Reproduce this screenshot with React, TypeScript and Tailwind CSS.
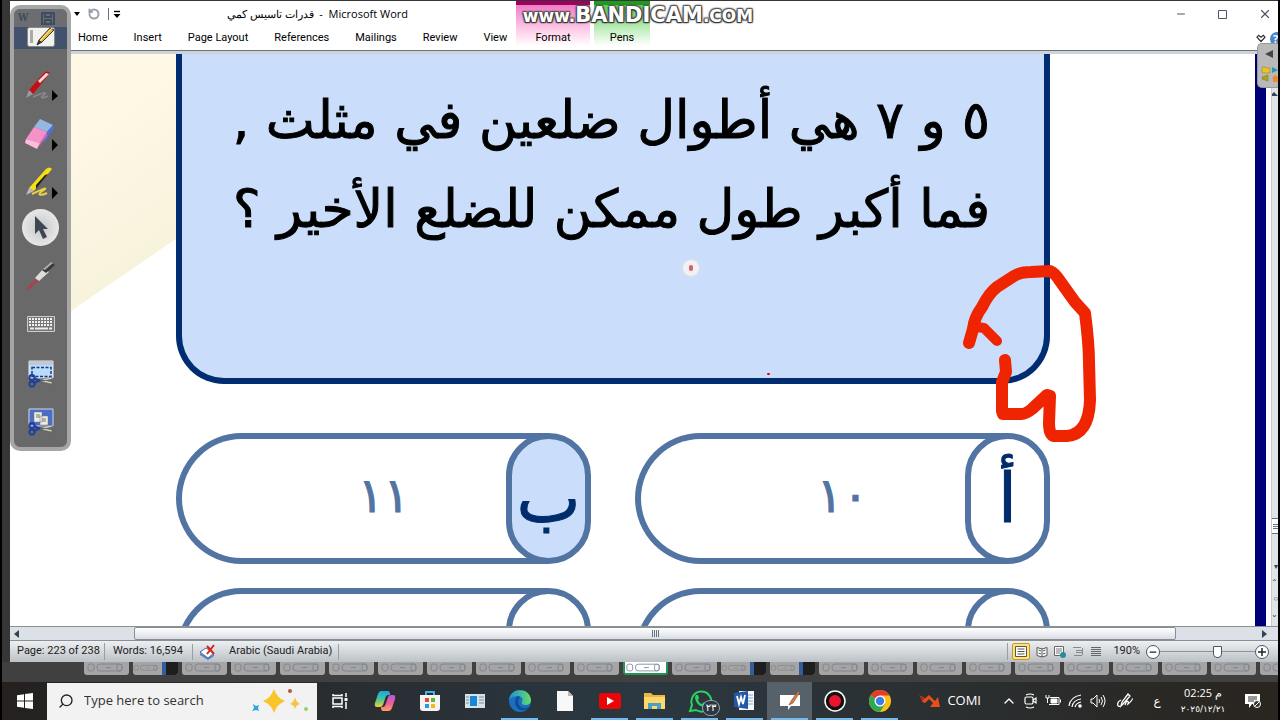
import React from 'react';
import clsx from 'clsx';
import { Minus, Square, X, ChevronUp, Search, RotateCcw } from 'lucide-react';

const tabs = ['Home', 'Insert', 'Page Layout', 'References', 'Mailings', 'Review', 'View'];

const options = [
    { letter: 'أ', answer: '١٠', selected: false },
    { letter: 'ب', answer: '١١', selected: true },
    { letter: 'ج', answer: '', selected: false },
    { letter: 'د', answer: '', selected: false },
];

const thumbs = Array.from({ length: 25 }, (_, i) => i);
const darkThumbs = [1, 13, 14];

function QuickAccess() {
    return (
        <div className="flex items-center gap-2 pl-16">
            <button aria-label="Undo options" className="h-0 w-0 border-x-[3px] border-t-4 border-x-transparent border-t-black" />
            <button aria-label="Repeat" className="text-gray-400">
                <RotateCcw className="h-3 w-3" strokeWidth={4} />
            </button>
            <div className="flex items-center gap-1">
                <div className="h-3 w-px bg-gray-500" />
                <button aria-label="Customize toolbar">
                    <svg width="8" height="9" viewBox="0 0 8 9">
                        <path d="M1 1.5h6" stroke="#000" strokeWidth="1.4" />
                        <path d="M.5 4h7L4 8z" />
                    </svg>
                </button>
            </div>
        </div>
    );
}

function Header() {
    return (
        <header className="relative flex h-[53px] shrink-0 border-b-[3px] border-[#d0d3d6] bg-white text-black">
            <div className="flex w-[506px] flex-col">
                <div className="flex h-[26px] items-center">
                    <QuickAccess />
                    <h1 dir="ltr" className="ml-auto mr-[108px] flex whitespace-pre text-[11px]">
                        <span dir="rtl">قدرات تاسيس كمي</span>
                        <span>{'  -  Microsoft Word'}</span>
                    </h1>
                </div>
                <nav className="flex h-[23px] items-center pl-[55px] font-['Roboto']">
                    {tabs.map(tab => (
                        <button key={tab} className="px-[13px] text-[11px] whitespace-nowrap">{tab}</button>
                    ))}
                </nav>
            </div>
            <button className="flex h-[45px] w-[74px] items-end justify-center border-t-4 border-[#a00060] bg-linear-to-b from-[#f07cc4] to-white font-['Roboto'] text-[11px]">Format</button>
            <button className="ml-1 flex h-[45px] w-14 items-end justify-center border-t-4 border-[#1f9a1f] bg-linear-to-b from-[#58d058] to-white font-['Roboto'] text-[11px]">Pens</button>
            <div className="ml-auto flex flex-col items-end">
                <div className="flex h-[26px] items-center gap-[30px] pr-[6px] text-gray-600">
                    <button aria-label="Minimize"><Minus className="h-3 w-3" strokeWidth={2} /></button>
                    <button aria-label="Maximize">
                        <svg width="11" height="11" viewBox="0 0 11 11" fill="none" stroke="currentColor"><path d="M1.500 1.500h8v8h-8z" /></svg>
                    </button>
                    <button aria-label="Close"><X className="h-[14px] w-[14px]" strokeWidth={2} /></button>
                </div>
                <div className="flex h-[23px] items-center gap-1">
                    <button aria-label="Minimize the ribbon">
                        <svg width="10" height="9" viewBox="0 0 10 9" fill="none" stroke="#333" strokeWidth="1.2">
                            <path d="M1 3.2 2.7 1.3 5 3.2 7.3 1.3 9 3.2 5 7.5z" />
                        </svg>
                    </button>
                    <button aria-label="Help" className="flex h-[14px] w-2 overflow-hidden rounded-l-full bg-[#4a86c8] pl-[3px] text-[11px] leading-[14px] font-bold text-white">?</button>
                </div>
            </div>
            <div className="absolute inset-x-0 bottom-0 h-px bg-gray-500" />
            <div className="absolute inset-x-0 top-[2px] flex items-baseline justify-center pr-3 font-['DejaVu_Sans'] text-[17px] leading-6 font-bold text-white [text-shadow:1px_1px_1px_#333,-1px_-1px_1px_#555,1px_-1px_1px_#555,-1px_1px_1px_#333,0_0_3px_#444]">
                <span>www.</span>
                <span className="text-[21px]">BANDICAM</span>
                <span>.COM</span>
            </div>
        </header>
    );
}

function Scissors() {
    return (
        <g>
            <path d="M10 20 25 17v2L12 22zM11 21l14 3v-2L12 19z" fill="#d6d8c8" stroke="#555" strokeWidth=".5" />
            <g fill="none" stroke="#1f3f9c" strokeWidth="2">
                <circle cx="5" cy="17.500" r="2.600" />
                <circle cx="5" cy="24" r="2.600" />
                <path d="m7 18 6 3M7 23l6-3" />
            </g>
        </g>
    );
}

function PenToolbar() {
    return (
        <aside className="absolute top-1 left-0 flex h-[446px] w-[61px] flex-col items-center overflow-hidden rounded-[10px] border-4 border-[#a6a6a6] bg-[#696969]">
            <div className="flex h-[18px] w-full items-center gap-3 bg-[#6b6d70] pl-1 text-[#3f4b5f]">
                <span className="font-serif text-[11px] font-bold">W</span>
                <svg width="14" height="13" viewBox="0 0 14 13" fill="none" stroke="currentColor" strokeWidth="2">
                    <path d="M1 1h12v11H1zM4 1v4h6V1M4 12V8h6v4" />
                </svg>
            </div>
            <button aria-label="Whiteboard" className="flex h-[22px] w-full shrink-0 justify-center bg-[#42526d]">
                <svg width="28" height="20" viewBox="0 0 28 20">
                    <rect x=".5" y=".5" width="27" height="19" rx="2" fill="#f1f1ee" stroke="#888" />
                    <path d="M3 3h3v13H3z" fill="#aaa" />
                    <path d="m10 18 2-5L23 1l4 2-12 12z" fill="#eab530" stroke="#333" />
                    <path d="m10 18 2-5 3 2z" fill="#333" />
                    <path d="m13 14 12-13" stroke="#fff2a5" />
                </svg>
            </button>
            <button aria-label="Pen" className="mt-5 h-8 w-9">
                <svg width="36" height="32" viewBox="0 0 36 32">
                    <path d="M10 28c8-4 16-6 11-2-5 3-2 4 4 1" fill="none" stroke="#888" strokeWidth="1.500" />
                    <path d="M6 21 21 4q3-3 6 0L10 25z" fill="#c90c13" />
                    <path d="m15 12 8-8 3 1-9 9z" fill="#ffd8d8" />
                    <path d="m6 21 4 4-7 4z" fill="#9a9a9a" />
                    <path d="m29 21 6 6-6 5z" />
                </svg>
            </button>
            <button aria-label="Eraser" className="mt-4 h-8 w-9">
                <svg width="36" height="34" viewBox="0 0 36 34">
                    <path d="M17 2 30 8 24 15 11 10z" fill="#94b8df" />
                    <path d="m30 8 1 3-10 15-1-4 4-7z" fill="#4e70dc" />
                    <path d="m11 10 13 5-7 11-14-4z" fill="#f791c9" />
                    <path d="m3 22 14 4-3 6L2 26z" fill="#ffbddd" />
                    <path d="m17 26 7-11v4L14 32z" fill="#da69ac" />
                    <path d="m29 22 6 6-6 6z" />
                </svg>
            </button>
            <button aria-label="Highlighter" className="mt-4 h-8 w-9">
                <svg width="36" height="34" viewBox="0 0 36 34">
                    <path d="M9 29c17-8 15-6 9-2-4 3 0 4 6 1" fill="none" stroke="#e8cf49" strokeWidth="2" />
                    <path d="M6 23 23 4q3-3 6 0L11 26z" fill="#f7df14" />
                    <path d="m13 20 9-10 3-1-12 15z" fill="#222" />
                    <path d="m6 23 5 3-8 4z" fill="#bbb" />
                    <path d="m29 22 6 6-6 6z" />
                </svg>
            </button>
            <button aria-label="Pointer" className="mt-3 flex h-[37px] w-[37px] shrink-0 items-center justify-center rounded-full bg-radial from-[#c6c6c6] to-[#f6f6f6]">
                <svg width="18" height="26" viewBox="0 0 18 26">
                    <path d="M3 1v18l4-4 4 9 4-2-4-8h5z" fill="#3f4653" />
                </svg>
            </button>
            <button aria-label="Laser pointer" className="mt-[14px] h-8 w-8">
                <svg width="32" height="32" viewBox="0 0 32 32">
                    <path d="m3 29 12-12" stroke="#c53343" strokeWidth="2" />
                    <path d="m10 18 9-10 5 4-10 9z" fill="#ddd" />
                    <path d="m17 10 9-8 4 3-9 8z" fill="#373a38" />
                    <path d="m18 9 8-7 2 1-8 7z" fill="#aaa" />
                </svg>
            </button>
            <button aria-label="Keyboard" className="mt-6">
                <svg width="28" height="16" viewBox="0 0 28 16">
                    <path d="M.5.5h27v15H.5z" fill="#777" stroke="#ccc" />
                    <path d="M2 3h24M2 6h24M2 9h24" stroke="#f2f2f2" strokeWidth="2" strokeDasharray="2 1" />
                    <path d="M3 12.500h22" stroke="#eee" strokeWidth="2" strokeDasharray="4 1 13 1" />
                </svg>
            </button>
            <button aria-label="Capture window" className="mt-7">
                <svg width="28" height="28" viewBox="0 0 28 28">
                    <path d="M2 1h24v17H2z" fill="#b8ddfa" stroke="#e7e9ee" />
                    <path d="M2 1h24v4H2z" fill="#c4c8d2" />
                    <path d="M5 7.500h19v9H5z" fill="none" stroke="#173b8c" strokeWidth="1.500" strokeDasharray="3 1.500" />
                    <Scissors />
                </svg>
            </button>
            <button aria-label="Capture page" className="mt-5">
                <svg width="28" height="28" viewBox="0 0 28 28">
                    <path d="M2 1h24v17H2z" fill="#4a6dc5" stroke="#d3daf0" />
                    <path d="M7 4h8v10H7zM13 8h8v9h-8z" fill="#eeeee4" stroke="#777" strokeWidth=".5" />
                    <path d="M9 7h4M9 9h4M15 11h4M15 13h4" stroke="#777" />
                    <Scissors />
                </svg>
            </button>
        </aside>
    );
}

function Ink() {
    return (
        <svg className="pointer-events-none absolute top-[206px] left-[945px]" width="150" height="190" viewBox="955 260 150 190" fill="none" stroke="#ef2400" strokeWidth="12" strokeLinecap="round" strokeLinejoin="round">
            <path d="M969 343 973 329Q974 318 982 307 989 293 997 287L1014 276Q1020 272 1031 272L1050 271Q1055 273 1060 281L1075 302 1085 313Q1089 344 1089 362L1090 400Q1089 434 1067 436L1054 436Q1049 435 1049 423L1050 396 1047 395 1032 409Q1026 414 1021 414L1003 414 1002 411 1002 382 1006 372 1005 360" />
            <path d="M977 327 984 328 990 334 997 341" strokeWidth="10" />
        </svg>
    );
}

function Document() {
    return (
        <div className="flex min-h-0 flex-1">
            <main dir="rtl" lang="ar" className="relative flex-1 overflow-hidden bg-white pr-[205px] pl-[166px] font-['DejaVu_Sans',sans-serif]">
                <svg className="absolute top-0 left-0" width="170" height="300" viewBox="0 0 170 300">
                    <defs>
                        <linearGradient id="sand" x1="0" y1="0" x2=".4" y2="1">
                            <stop offset=".4" stopColor="#fef8e4" />
                            <stop offset="1" stopColor="#f5f1da" />
                        </linearGradient>
                    </defs>
                    <path d="M0 0H170V182L0 299z" fill="url(#sand)" />
                </svg>
                <section className="relative h-[330px] rounded-b-[48px] border-[6px] border-t-0 border-[#002c72] bg-[#cadefb] px-[54px] pt-[22px] text-[52px] leading-[89px] whitespace-nowrap text-black [-webkit-text-stroke:1px_black]">
                    <p>٥ و ٧ هي أطوال ضلعين في مثلث ,</p>
                    <p>فما أكبر طول ممكن للضلع الأخير ؟</p>
                </section>
                <div className="mt-[49px] grid grid-cols-2 gap-x-11 gap-y-6">
                    {options.map(option => (
                        <button key={option.letter} dir="ltr" className="flex h-[131px]">
                            <span className="-mr-[43px] flex h-full flex-1 items-center justify-center rounded-l-full border-[6px] border-r-0 border-[#5274a2] pb-2 pl-9 text-[48px] text-[#5274a2] [-webkit-text-stroke:1px_#5274a2]">
                                {option.answer}
                            </span>
                            <span className={clsx(
                                'relative flex h-full w-[85px] items-center justify-center rounded-full border-[6px] border-[#5274a2] text-[68px] leading-none text-[#002c6c] [-webkit-text-stroke:1px_#002c6c]',
                                option.selected ? 'bg-[#cadefb]' : 'bg-white'
                            )}>
                                {option.answer && option.letter}
                            </span>
                        </button>
                    ))}
                </div>
                <Ink />
                {/* laser pointer */}
                <div className="absolute top-[204px] left-[671px] flex h-5 w-5 items-center justify-center rounded-full border-2 border-[#d3dfee] bg-[#f0f0f5]">
                    <div className="h-[6px] w-1 rounded-full bg-[#d4616b]" />
                </div>
                <div className="absolute top-[319px] left-[757px] h-[2px] w-[3px] rounded-full bg-red-600" />
            </main>
            <div className="w-[11px] bg-[#000078]" />
            <div className="w-[5px] bg-white" />
            <div className="flex w-[7px] flex-col items-end justify-between overflow-hidden border-l border-[#c3c9ce] bg-[#dfe4e8] pt-[38px]">
                <button aria-label="Scroll up" className="h-0 w-0 border-x-4 border-b-4 border-x-transparent border-b-gray-700" />
                <div className="mt-auto flex h-4 w-[7px] flex-col justify-center gap-px border border-r-0 border-gray-500 bg-white pl-px">
                    <div className="h-px bg-gray-500" />
                    <div className="h-px bg-gray-500" />
                    <div className="h-px bg-gray-500" />
                </div>
                <div className="flex h-[92px] flex-col items-end justify-end gap-2 pb-2 text-[8px] leading-2 text-gray-700">
                    <span>▾</span>
                    <span>⌃</span>
                    <span>○</span>
                    <span>⌄</span>
                </div>
            </div>
        </div>
    );
}

function HorizontalScroll() {
    return (
        <div className="flex h-[15px] shrink-0 items-center border-y border-[#8b9095] bg-[#dce1e7] pr-[11px] pl-1">
            <button aria-label="Scroll left" className="h-0 w-0 border-y-4 border-r-[5px] border-y-transparent border-r-gray-700" />
            <div className="ml-[115px] flex h-[13px] flex-1 items-center justify-center gap-px rounded-xs border border-[#888e94] bg-linear-to-b from-white to-[#d9dee4]">
                <div className="h-[7px] w-px bg-gray-500" />
                <div className="h-[7px] w-px bg-gray-500" />
                <div className="h-[7px] w-px bg-gray-500" />
                <div className="h-[7px] w-px bg-gray-500" />
            </div>
            <button aria-label="Scroll right" className="ml-[86px] h-0 w-0 border-y-4 border-l-[5px] border-y-transparent border-l-gray-700" />
        </div>
    );
}

function StatusBar() {
    return (
        <footer className="flex h-[21px] shrink-0 items-center bg-linear-to-b from-[#edf0f2] to-[#bcc1c6] font-['Roboto'] text-[11px] whitespace-nowrap text-[#222]">
            <span className="w-[94px] pl-[7px]">Page: 223 of 238</span>
            <span className="w-[88px] border-l border-[#9a9fa4] pl-2">Words: 16,594</span>
            <span className="flex h-4 w-[147px] items-center gap-[14px] border-x border-[#9a9fa4] pl-[6px]">
                <svg width="16" height="16" viewBox="0 0 16 16" className="shrink-0">
                    <path d="M1 8 7 4l8 5-6 5z" fill="#fff" stroke="#4468a4" />
                    <path d="m1 9 8 5 6-4v2l-6 4-8-5z" fill="#4f7fc4" />
                    <path d="m8 2 7 8M15 1 8 10" stroke="#d3241d" strokeWidth="2" />
                </svg>
                Arabic (Saudi Arabia)
            </span>
            <div className="ml-auto flex items-center gap-[6px] border-l border-[#9a9fa4] pr-[9px] pl-1">
                <button aria-label="Print layout" className="flex h-[17px] w-[18px] items-center justify-center rounded-xs border border-[#c49a27] bg-[#ffe27c]">
                    <svg width="12" height="11" viewBox="0 0 12 11">
                        <path d="M.5.5h11v10H.5z" fill="#fff" stroke="#555" />
                        <path d="M2.500 3h7M2.500 5.500h7M2.500 8h7" stroke="#555" />
                    </svg>
                </button>
                <button aria-label="Full screen reading">
                    <svg width="12" height="12" viewBox="0 0 12 12" fill="#fff" stroke="#555">
                        <path d="M1 1.500 6 3l5-1.500v8L6 11 1 9.500zM6 3v8M2.500 4 5 5M2.500 7 5 8M7 5l2.500-1M7 8l2.500-1" />
                    </svg>
                </button>
                <button aria-label="Web layout">
                    <svg width="12" height="12" viewBox="0 0 12 12">
                        <path d="M.5.500h9v9h-9z" fill="#fff" stroke="#666" />
                        <path d="M2 3h6M2 5h6M2 7h4" stroke="#777" />
                        <circle cx="9" cy="9" r="3" fill="#2b8a9a" />
                    </svg>
                </button>
                <button aria-label="Outline">
                    <svg width="12" height="11" viewBox="0 0 12 11" stroke="#888">
                        <path d="M1 1.500h8M4 4.500h6M4 6.500h6M2 9.500h8M10.500 2v7" />
                    </svg>
                </button>
                <button aria-label="Draft">
                    <svg width="12" height="11" viewBox="0 0 12 11" stroke="#666">
                        <path d="M1 1.500h10M1 3.500h10M1 5.500h10M1 7.500h10M1 9.500h10" />
                    </svg>
                </button>
                <button className="ml-1 w-7 text-right">190%</button>
                <div className="flex items-center">
                    <button aria-label="Zoom out" className="flex h-[14px] w-[14px] items-center justify-center rounded-full border border-gray-600 bg-white"><Minus className="h-[10px] w-[10px]" strokeWidth={3} /></button>
                    <input
                        type="range"
                        aria-label="Zoom"
                        min={10}
                        max={500}
                        defaultValue={310}
                        className="h-[13px] w-[95px] appearance-none bg-[linear-gradient(#8d9297,#8d9297)] bg-[length:100%_1px] bg-center bg-no-repeat [&::-webkit-slider-thumb]:h-[12px] [&::-webkit-slider-thumb]:w-[9px] [&::-webkit-slider-thumb]:appearance-none [&::-webkit-slider-thumb]:rounded-b-[4px] [&::-webkit-slider-thumb]:border [&::-webkit-slider-thumb]:border-gray-600 [&::-webkit-slider-thumb]:bg-white"
                    />
                    <button aria-label="Zoom in" className="flex h-[14px] w-[14px] items-center justify-center rounded-full border border-gray-600 bg-white text-sm leading-none">
                        <svg width="8" height="8" viewBox="0 0 8 8" stroke="#222" strokeWidth="1.500"><path d="M4 0v8M0 4h8" /></svg>
                    </button>
                </div>
            </div>
        </footer>
    );
}

function Thumbnails() {
    return (
        <div className="flex h-5 shrink-0 gap-1 overflow-hidden bg-[#404040] pl-[82px]">
            {thumbs.map(i => (
                <div key={i} className={clsx(
                    'flex h-[13px] w-[45px] shrink-0 justify-end overflow-hidden rounded-b-[3px]',
                    i === 11 ? 'border-2 border-t-0 border-[#219653] bg-white' : 'bg-[#a5a5a5]'
                )}>
                    <svg width="43" height="13" viewBox="0 0 43 13" fill="none" stroke={i === 11 ? '#8a93a5' : '#808691'}>
                        <rect x="2" y="2" width="6" height="7" rx="2" />
                        <rect x="11" y="2" width="25" height="7" rx="3" />
                        <rect x="31" y="2" width="5" height="7" rx="2" />
                        <path d="M20 5.500h5" />
                    </svg>
                    {darkThumbs.includes(i) && <div className="w-4 shrink-0 border-l-4 border-[#315f9d] bg-[#1e1e1e]" />}
                </div>
            ))}
        </div>
    );
}

function AppButton({ label, active, running, children }: { label: string; active?: boolean; running?: boolean; children: React.ReactNode }) {
    return (
        <button aria-label={label} className={clsx('relative flex h-full w-[45px] items-center justify-center', active && 'bg-[#56616a]')}>
            {children}
            {running && <span className="absolute inset-x-1 bottom-0 h-[2px] bg-[#76b9ed]" />}
        </button>
    );
}

function Taskbar() {
    return (
        <div className="flex h-[38px] shrink-0 items-center bg-linear-to-r from-[#24211f] via-[#2b3841] via-50% to-[#29251f] text-white">
            <button aria-label="Start" className="flex h-full w-[45px] items-center justify-center">
                <svg width="16" height="16" viewBox="0 0 16 16" fill="#fff">
                    <path d="M0 2.200 7 1.200V7.500H0zM8 1 16 0V7.500H8zM0 8.500H7V14.800L0 13.800zM8 8.500H16V16L8 15z" />
                </svg>
            </button>
            <label className="flex h-[37px] w-[270px] items-center bg-[#f2f2f2] pl-[11px] text-[#222]">
                <Search className="h-4 w-4 shrink-0 -scale-x-100" strokeWidth={2} />
                <input type="text" aria-label="Search" placeholder="Type here to search" className="ml-[10px] min-w-0 flex-1 text-[13px] outline-none placeholder:text-[#333]" />
                <svg width="58" height="30" viewBox="0 0 58 30" className="mr-2">
                    <path d="M23 3q3 9 11 12-8 3-11 12-3-9-11-12 8-3 11-12" fill="#f9c52b" />
                    <path d="M44 11q1 5 5 7-4 1-5 5-1-4-5-5 4-2 5-7" fill="#f4c54a" />
                    <path d="m2 18 3 2 3-1-1 3 1 3-3-1-4 1 2-3z" fill="#2aa8da" />
                    <circle cx="39" cy="5" r="2" fill="#b8592d" />
                    <circle cx="55" cy="23" r="2" fill="#92d46b" />
                </svg>
            </label>
            <div className="flex h-full">
                <AppButton label="Task view">
                    <svg width="16" height="16" viewBox="0 0 16 16" fill="none" stroke="#fff" strokeWidth="1.500">
                        <path d="M1 5h9v6H1zM1 1v1.500h9V1M1 15v-1.500h9V15M14 0v4M14 9v7" />
                        <path d="M12.500 5h3v3h-3z" fill="#fff" stroke="none" />
                    </svg>
                </AppButton>
                <AppButton label="Copilot">
                    <svg width="22" height="22" viewBox="0 0 22 22">
                        <defs>
                            <linearGradient id="cpa" x1="0" y1="0" x2="0" y2="1"><stop stopColor="#19a8e5" /><stop offset=".5" stopColor="#45c49b" /><stop offset="1" stopColor="#f2cf35" /></linearGradient>
                            <linearGradient id="cpb" x1="0" y1="0" x2="0" y2="1"><stop stopColor="#b05ae0" /><stop offset=".5" stopColor="#f05a9d" /><stop offset="1" stopColor="#ffa15f" /></linearGradient>
                        </defs>
                        <path d="M7 1h7q2 0 2 4h-2q-2 0-3 4l-2 6q-1 2-3 2H3q-3 0-2-4L4 4q1-3 3-3" fill="url(#cpa)" />
                        <path d="M15 21H9q-2 0-2-4h2q2 0 3-4l2-6q1-2 3-2h2q3 0 2 4l-3 9q-1 3-3 3" fill="url(#cpb)" />
                    </svg>
                </AppButton>
                <AppButton label="Store">
                    <svg width="22" height="22" viewBox="0 0 22 22">
                        <path d="M7 5V2h8v3" fill="none" stroke="#35b6e8" strokeWidth="2" />
                        <path d="M1 5h20v13q0 3-3 3H4q-3 0-3-3z" fill="#f3f3f3" />
                        <path d="M6 8h4v4H6z" fill="#e34c2e" /><path d="M12 8h4v4h-4z" fill="#69b52f" />
                        <path d="M6 14h4v4H6z" fill="#259be0" /><path d="M12 14h4v4h-4z" fill="#f3b91b" />
                    </svg>
                </AppButton>
                <AppButton label="News">
                    <svg width="20" height="16" viewBox="0 0 20 16">
                        <path d="M0 1h20v14H0z" fill="#d9e2e8" />
                        <path d="M5 3h7v10H5z" fill="#1687d9" />
                        <path d="M1 4h3M1 7h3M1 10h3M14 4h5M14 7h5M14 10h5" stroke="#7c8993" />
                    </svg>
                </AppButton>
                <AppButton label="Edge" running>
                    <svg width="24" height="24" viewBox="0 0 24 24">
                        <defs>
                            <linearGradient id="edge" x1="0" y1="0" x2="1" y2="0"><stop stopColor="#1a8fe0" /><stop offset="1" stopColor="#63df63" /></linearGradient>
                        </defs>
                        <circle cx="12" cy="12" r="11" fill="#1a70c0" />
                        <path d="M1 11C2-2 22-2 23 11q0 5-6 5-4 0-3-3 2-5-4-6-6 0-9 4" fill="url(#edge)" />
                        <path d="M10 7c-5 3-3 12 2 14q6 1 9-3-7 3-10-2-2-5 1-8z" fill="#134b91" />
                    </svg>
                </AppButton>
                <AppButton label="File">
                    <svg width="16" height="20" viewBox="0 0 16 20">
                        <path d="M0 0h11l5 5v15H0z" fill="#f8f8f8" />
                        <path d="M11 0v5h5z" fill="#bbb" />
                    </svg>
                </AppButton>
                <AppButton label="YouTube" running>
                    <svg width="22" height="16" viewBox="0 0 22 16">
                        <rect width="22" height="16" rx="3" fill="#e90606" />
                        <path d="m8 4 7 4-7 4z" fill="#fff" />
                    </svg>
                </AppButton>
                <AppButton label="File Explorer" running>
                    <svg width="21" height="18" viewBox="0 0 21 18">
                        <path d="M0 1h7l2 2h12v14H0z" fill="#e9b83f" />
                        <path d="M0 5h21v12H0z" fill="#ffd869" />
                        <path d="M4 17v-6h13v6h-4v-3H8v3z" fill="#45a1c9" />
                    </svg>
                </AppButton>
                <AppButton label="WhatsApp" running>
                    <svg width="24" height="24" viewBox="0 0 24 24">
                        <path d="m2 22 2-6A10 10 0 1 1 8 21z" fill="none" stroke="#2cd35f" strokeWidth="2" />
                        <path d="M8 6h2l1 3-1 2q1 3 4 4l2-2 3 2q0 3-4 3Q8 16 7 9q0-2 1-3" fill="#2cd35f" />
                    </svg>
                    <span className="absolute top-[18px] right-[2px] h-4 w-[18px] rounded-full border border-gray-400 bg-[#2b3841] text-center font-['DejaVu_Sans'] text-[10px] leading-[14px]">٢٣</span>
                </AppButton>
                <AppButton label="Word" running>
                    <svg width="21" height="20" viewBox="0 0 21 20">
                        <path d="M5 0h15v19H5z" fill="#f5f7fb" />
                        <path d="M14 4h5M14 7h5M14 10h5M14 13h5" stroke="#87a2cc" />
                        <path d="m0 2 14-2v18L0 16z" fill="#2457a6" />
                        <path d="m3 5 2 8 2-7 2 7 2-9" fill="none" stroke="#fff" strokeWidth="1.800" />
                    </svg>
                </AppButton>
                <AppButton label="Whiteboard" active running>
                    <svg width="22" height="20" viewBox="0 0 22 20">
                        <path d="M1 4h20v11h-9l-3 4v-4H1z" fill="#fff" />
                        <path d="m10 14 2-4 7-10 2 1-7 11z" fill="#d87a43" stroke="#63371e" strokeWidth=".5" />
                    </svg>
                </AppButton>
                <AppButton label="Bandicam" running>
                    <svg width="22" height="22" viewBox="0 0 22 22">
                        <circle cx="11" cy="11" r="10" fill="#111" stroke="#fff" strokeWidth="1.500" />
                        <circle cx="11" cy="11" r="6" fill="#e9152e" />
                    </svg>
                </AppButton>
                <AppButton label="Chrome" running>
                    <svg width="22" height="22" viewBox="0 0 22 22">
                        <circle cx="11" cy="11" r="11" fill="#fbc116" />
                        <path d="M11 11 1.500 5.500A11 11 0 0 1 20.500 5.500H11z" fill="#e33b2e" />
                        <path d="M1.500 5.500A11 11 0 0 0 11 22l5-8-5-3z" fill="#2da94f" />
                        <circle cx="11" cy="11" r="5.500" fill="#fff" />
                        <circle cx="11" cy="11" r="4.200" fill="#3c7de8" />
                    </svg>
                </AppButton>
            </div>
            <div className="ml-auto flex h-full items-center pr-[17px]">
                <button className="mr-5 flex items-center gap-[6px] text-[13px]">
                    <svg width="22" height="14" viewBox="0 0 22 14">
                        <path d="m0 1 5 2 3 5-4 1z" fill="#a8321a" />
                        <path d="m3 7 7-6 6 6 3-4 2 10H11l3-4-4-4-4 4z" fill="#e84e1b" />
                    </svg>
                    COMI
                </button>
                <div className="flex items-center gap-[7px]">
                    <button aria-label="Show hidden icons"><ChevronUp className="h-4 w-4" /></button>
                    <button aria-label="Meet now">
                        <svg width="14" height="16" viewBox="0 0 14 16" fill="none" stroke="#fff" strokeWidth="1.200">
                            <rect x="1" y="4" width="8" height="7" rx="1.500" />
                            <path d="m9 7 3-2v5L9 8M2 2q4-2 8 0M2 14q4 2 8 0" />
                        </svg>
                    </button>
                    <button aria-label="Battery">
                        <svg width="16" height="14" viewBox="0 0 16 14" fill="none" stroke="#fff">
                            <path d="M5 3.500h9v7H4M15.500 5.500v3M1 1v3h3V1M2.500 4v5" />
                            <path d="M6 5h6v4H6z" fill="#fff" />
                        </svg>
                    </button>
                    <button aria-label="Wi-Fi">
                        <svg width="15" height="14" viewBox="0 0 15 14" fill="none" stroke="#fff" strokeWidth="1.200">
                            <path d="M1 12Q2 3 13 1M4 13q1-7 9-8M7 13q1-4 6-5" />
                            <circle cx="12" cy="12" r="1.200" fill="#fff" />
                        </svg>
                    </button>
                    <button aria-label="Volume">
                        <svg width="16" height="14" viewBox="0 0 16 14" fill="none" stroke="#fff">
                            <path d="M1 5h2l4-4v12L3 9H1z" />
                            <path d="M9 5q1 2 0 4M11 3q3 4 0 8M13 1q4 6 0 12" />
                        </svg>
                    </button>
                    <button aria-label="Pen workspace" className="ml-1">
                        <svg width="16" height="16" viewBox="0 0 16 16" fill="none" stroke="#fff" strokeWidth="1.300">
                            <path d="m4 13 1-4 6-8 2 2-7 8zM4 7C-1 9 0 15 4 13M8 12c2-6 4-4 3-1 4-3 5-6 4-5" />
                        </svg>
                    </button>
                </div>
                <button className="ml-[14px] w-5 text-center font-['DejaVu_Sans'] text-[12px]">ع</button>
                <button className="ml-[10px] flex w-[52px] flex-col items-center text-[11px] leading-4 whitespace-nowrap">
                    <span>02:25 م</span>
                    <span className="font-['DejaVu_Sans'] text-[9px]">٢٠٢٥/١٢/٢١</span>
                </button>
                <button aria-label="Notifications" className="ml-4">
                    <svg width="16" height="16" viewBox="0 0 16 16">
                        <path d="M0 1h15v10H7l-3 4v-4H0z" fill="#fff" />
                        <path d="M3 4h9M3 6h9M3 8h6" stroke="#333" />
                        <circle cx="12" cy="11" r="3.500" fill="#333" stroke="#fff" />
                        <path d="m10 13 4-4" stroke="#fff" />
                    </svg>
                </button>
            </div>
        </div>
    );
}

export default function App() {
    return (
        <div className="flex h-screen flex-col overflow-hidden border-x-2 border-black bg-[#363636] font-['Open_Sans',sans-serif]">
            <div className="relative mt-px ml-2 flex min-h-0 flex-1 flex-col bg-white">
                <Header />
                <Document />
                <HorizontalScroll />
                <StatusBar />
                <PenToolbar />
                <div className="absolute top-[42px] right-0 flex h-[45px] w-[21px] flex-col items-end rounded-l-[5px] border border-r-0 border-[#999] bg-[#b9b9b9] pt-[6px]">
                    <button aria-label="Expand panel" className="mr-[5px] h-0 w-0 border-y-4 border-r-8 border-y-transparent border-r-[#444]" />
                    <svg width="17" height="17" viewBox="0 0 17 17" className="mt-2">
                        <path d="M1 1h3l1 1h4v5H1z" fill="#e5c52d" stroke="#8d7815" strokeWidth=".5" />
                        <path d="m11 1 6 3-6 3z" fill="#2795b9" />
                        <path d="m1 11 6-2v6l-6-2z" fill="#a8a524" stroke="#777517" strokeWidth=".5" />
                        <path d="m14 9 3 2v5h-5v-3l-1-1z" fill="#f18630" />
                    </svg>
                </div>
            </div>
            <Thumbnails />
            <Taskbar />
        </div>
    );
}
